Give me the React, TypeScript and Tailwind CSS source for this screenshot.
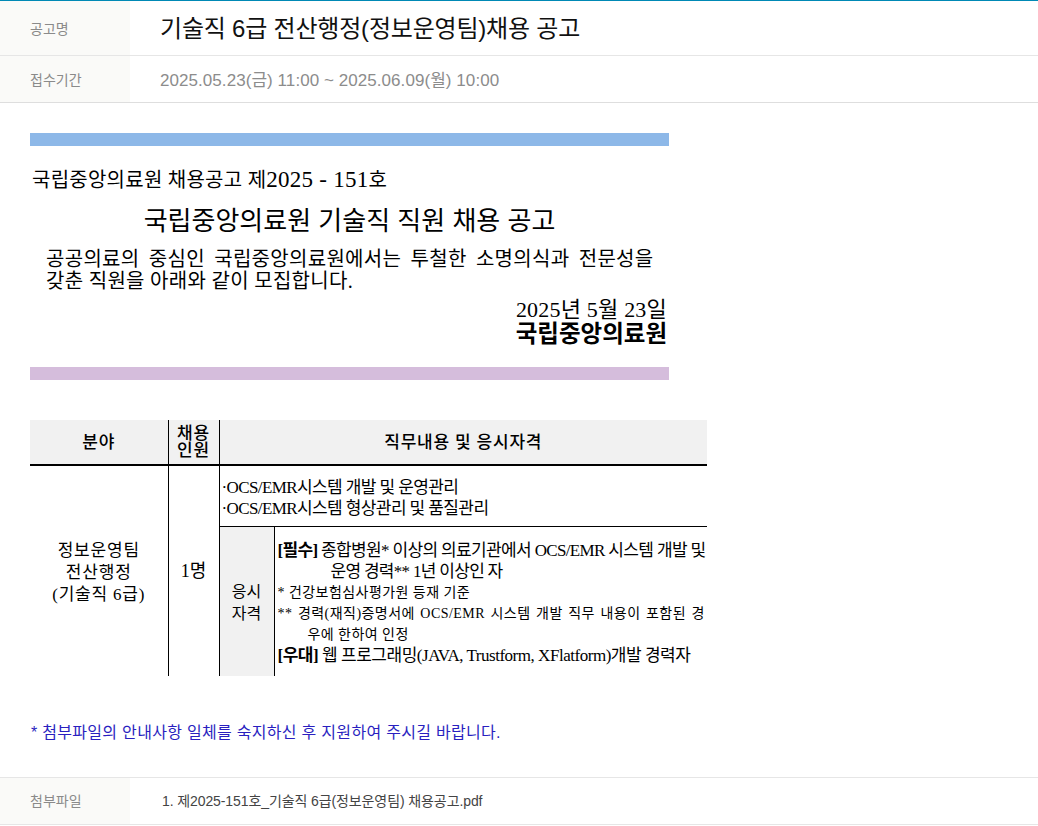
import React from 'react'

const sans = { fontFamily: '"Liberation Sans", "Noto Sans CJK KR", sans-serif' }

const doc = 'font-["Liberation_Serif","Noto_Sans_CJK_KR",serif] text-black'

export default function App() {
  return (
    <div className='w-[1038px] h-[826px] overflow-hidden bg-white font-["Liberation_Sans","Noto_Sans_CJK_KR",sans-serif]'>
      <div className="border-t border-[#0089b5]">
        <div className="flex h-[55px] border-b border-[#e6e6e6]">
          <div className="w-[130px] bg-[#fafaf8] pl-[30px] pt-[2px] flex items-center text-[14px] text-[#8a8a8a]">공고명</div>
          <div className="pl-[30px] pt-[2px] flex items-center text-[24px] tracking-[-0.2px] text-[#111]">기술직 6급 전산행정(정보운영팀)채용 공고</div>
        </div>
        <div className="flex h-[47px] border-b border-[#dedede]">
          <div className="w-[130px] bg-[#fafaf8] pl-[30px] pt-[3px] flex items-center text-[14px] text-[#8a8a8a]">접수기간</div>
          <div className="pl-[30px] pt-[3px] flex items-center text-[17px] tracking-[0.06px] text-[#8c8c8c]">2025.05.23(금) 11:00 ~ 2025.06.09(월) 10:00</div>
        </div>
      </div>

      <div className="pl-[30px] pt-[30px]">
        <div className="w-[639px] h-[13px] bg-[#8db8e8]" />
        <div className={`w-[639px] ${doc}`}>
          <p className="pt-[20px] pl-[2px] text-[20px] tracking-[0.25px] leading-[28px]">
            국립중앙의료원 채용공고 제<span className="text-[23px]">2025 - 151</span>호
          </p>
          <p className="pt-[10px] text-center text-[26px] leading-[34px] font-['Liberation_Sans','Noto_Sans_CJK_KR',sans-serif]">국립중앙의료원 기술직 직원 채용 공고</p>
          <p className="pt-[10px] pl-[16px] text-[20px] tracking-[0.3px] leading-[22px]">
            <span className="block [word-spacing:4px]">공공의료의 중심인 국립중앙의료원에서는 투철한 소명의식과 전문성을</span>
            <span className="block">갖춘 직원을 아래와 같이 모집합니다.</span>
          </p>
          <p className="pt-[5px] pr-[2px] text-right text-[22px] tracking-[0.2px] leading-[25px]">2025년 5월 23일</p>
          <p className="pr-[2px] text-right text-[23.5px] leading-[25px] font-bold">국립중앙의료원</p>
        </div>
        <div className="mt-[20px] w-[639px] h-[13px] bg-[#d5bddc]" />

        <table className={`mt-[40px] w-[677px] table-fixed border-collapse ${doc}`}>
          <colgroup>
            <col className="w-[138px]" />
            <col className="w-[51px]" />
            <col className="w-[55px]" />
            <col />
          </colgroup>
          <tbody>
            <tr className="h-[45px] bg-[#f1f1f1] border-b-2 border-black text-[17px] tracking-[0.8px] leading-[17px] font-medium">
              <td className="text-center border-r border-black">분야</td>
              <td className="text-center border-r border-black">채용<br />인원</td>
              <td colSpan={2} className="text-center">직무내용 및 응시자격</td>
            </tr>
            <tr className="h-[61px] border-b border-black">
              <td rowSpan={2} className="pt-[3px] text-center text-[17px] tracking-[0.8px] leading-[22px] border-r border-black">정보운영팀<br />전산행정<br />(기술직 6급)</td>
              <td rowSpan={2} className="text-center text-[18px] border-r border-black">1명</td>
              <td colSpan={2} className="pl-[2px] pt-[5px] text-[17px] leading-[21px] tracking-[-0.6px]">
                ·OCS/EMR시스템 개발 및 운영관리<br />·OCS/EMR시스템 형상관리 및 품질관리
              </td>
            </tr>
            <tr className="h-[150px]">
              <td className="bg-[#f1f1f1] border-r border-black pt-[4px] text-center text-[16px] leading-[22px]">응시<br />자격</td>
              <td className="pl-[2px] pt-[3px] whitespace-nowrap">
                <div className="pl-[1px] text-[17px] leading-[21px] tracking-[-0.65px]"><b>[필수]</b> 종합병원* 이상의 의료기관에서 OCS/EMR 시스템 개발 및</div>
                <div className="pl-[54px] text-[17px] leading-[21px] tracking-[-0.7px]">운영 경력** 1년 이상인 자</div>
                <div className="pl-[1px] text-[14px] leading-[21px] tracking-[0.45px]">* 건강보험심사평가원 등재 기준</div>
                <div className="pl-[1px] text-[14px] leading-[21px] tracking-[0.45px] [word-spacing:1.6px]">** 경력(재직)증명서에 OCS/EMR 시스템 개발 직무 내용이 포함된 경</div>
                <div className="pl-[31px] text-[14px] leading-[21px] tracking-[0.45px]">우에 한하여 인정</div>
                <div className="pl-[1px] text-[17px] leading-[21px] tracking-[-0.47px]"><b>[우대]</b> 웹 프로그래밍(JAVA, Trustform, XFlatform)개발 경력자</div>
              </td>
            </tr>
          </tbody>
        </table>

        <p className="mt-[46px] pl-[1px] text-[16px] leading-[22px] tracking-[0.3px] text-[#2a1fc0]" style={sans}>* 첨부파일의 안내사항 일체를 숙지하신 후 지원하여 주시길 바랍니다.</p>
      </div>

      <div className="mt-[33px] flex h-[48px] border-y border-[#e6e6e6]">
        <div className="w-[130px] bg-[#fafaf8] pl-[30px] pt-[1px] flex items-center text-[14px] text-[#8a8a8a]">첨부파일</div>
        <div className="pl-[32px] pt-[1px] flex items-center text-[14px] tracking-[-0.1px] text-[#444]">1. 제2025-151호_기술직 6급(정보운영팀) 채용공고.pdf</div>
      </div>
    </div>
  )
}
